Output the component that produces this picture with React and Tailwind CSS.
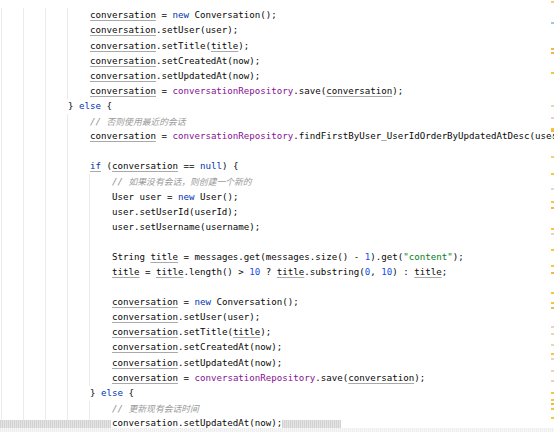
import React from 'react';

// token kinds: p plain, k keyword, f field, u underlined local, c comment, z cjk comment, n number, s string
const K = (t) => ({ k: 'k', t });
const U = (t) => ({ k: 'u', t });
const F = (t) => ({ k: 'f', t });
const N = (t) => ({ k: 'n', t });
const S = (t) => ({ k: 's', t });
const P = (t) => ({ k: 'p', t });
const C = (t) => [{ k: 'c', t: '// ' }, { k: 'z', t }];

const createBlock = (g) => [
  { g, tk: [U('conversation'), P(' = '), K('new'), P(' Conversation();')] },
  { g, tk: [U('conversation'), P('.setUser(user);')] },
  { g, tk: [U('conversation'), P('.setTitle('), U('title'), P(');')] },
  { g, tk: [U('conversation'), P('.setCreatedAt(now);')] },
  { g, tk: [U('conversation'), P('.setUpdatedAt(now);')] },
  { g, tk: [U('conversation'), P(' = '), F('conversationRepository'), P('.save('), U('conversation'), P(');')] },
];

const lines = [
  ...createBlock(4),
  { g: 3, tk: [P('} '), K('else'), P(' {')] },
  { g: 4, tk: C('否则使用最近的会话') },
  { g: 4, tk: [U('conversation'), P(' = '), F('conversationRepository'), P('.findFirstByUser_UserIdOrderByUpdatedAtDesc(userId);')] },
  { g: 4, tk: [] },
  { g: 4, tk: [{ k: 'ku', t: 'if' }, P(' ('), U('conversation'), P(' == '), K('null'), P(') {')] },
  { g: 5, tk: C('如果没有会话，则创建一个新的') },
  { g: 5, tk: [P('User user = '), K('new'), P(' User();')] },
  { g: 5, tk: [P('user.setUserId(userId);')] },
  { g: 5, tk: [P('user.setUsername(username);')] },
  { g: 5, tk: [] },
  { g: 5, tk: [P('String '), U('title'), P(' = messages.get(messages.size() - '), N('1'), P(').get('), S('"content"'), P(');')] },
  { g: 5, tk: [U('title'), P(' = '), U('title'), P('.length() > '), N('10'), P(' ? '), U('title'), P('.substring('), N('0'), P(', '), N('10'), P(') : '), U('title'), P(';')] },
  { g: 5, tk: [] },
  ...createBlock(5),
  { g: 4, tk: [P('} '), K('else'), P(' {')] },
  { g: 5, tk: C('更新现有会话时间') },
  { g: 5, tk: [P('conversation.setUpdatedAt(now);')], last: true },
];

const markers = [
  [1, '#f3c98a'], [22, '#9cc6ec'], [48, '#f0b84a'], [52, '#f0b84a'], [72, '#f5c53d'], [105, '#e3d6bd'],
  [117, '#ead0c4'], [128, '#f5c53d'], [130, '#f0b84a'], [136, '#e3d6bd'], [156, '#f1cf7a'], [173, '#f5c53d'],
  [188, '#dcdcd0'], [201, '#f5c53d'], [207, '#f0b84a'], [228, '#f5c53d'], [233, '#e3d6bd'], [249, '#f5c53d'],
  [265, '#f5c53d'], [272, '#f0b84a'], [292, '#f5c53d'], [302, '#f5c53d'], [307, '#f0b84a'], [326, '#e3d6bd'],
  [333, '#e3d6bd'], [344, '#e3d6bd'], [353, '#f5c53d'], [358, '#e3d6bd'], [370, '#e3d6bd'], [380, '#ead0c4'],
  [392, '#f5c53d'], [399, '#f5c53d'], [403, '#f0b84a'], [408, '#f5c53d'], [417, '#f5c53d'],
];

const tokenClass = {
  p: 'text-[#080808]',
  k: 'text-[#0033b3]',
  ku: 'text-[#0033b3] underline decoration-[#a9a9a9] underline-offset-2',
  f: 'text-[#871094]',
  u: 'text-[#080808] underline decoration-[#a9a9a9] underline-offset-2',
  c: 'text-[#8c8c8c] italic',
  z: "text-[#9a9a9a] italic text-[8.8px] font-['Noto_Sans_CJK_SC',sans-serif]",
  n: 'text-[#1750eb]',
  s: 'text-[#067d17]',
};

function CodeLine({ line }) {
  const guides = Array.from({ length: line.g });
  return (
    <div className="relative flex h-[15.1px] leading-[15.1px] whitespace-pre">
      {line.last && (
        <div className="absolute left-[-1px] top-[4px] h-[8px] w-[341px] bg-[repeating-linear-gradient(90deg,#d3d3d3_0_1px,#e3e3e3_1px_2px)]" />
      )}
      {guides.map((_, i) => (
        <span key={i} className="w-[22px] shrink-0 border-l border-[#ebebeb]" />
      ))}
      <span className={line.last ? 'relative bg-white pl-[1px]' : 'pl-[1px]'}>
        {line.tk.map((t, i) => (
          <span key={i} className={tokenClass[t.k]}>{t.t}</span>
        ))}
      </span>
    </div>
  );
}

export default function App() {
  return (
    <div className="relative h-[432px] w-[554px] overflow-hidden bg-white font-['DejaVu_Sans_Mono',monospace] text-[9.13px]">
      <div className="pl-[1px] pt-[8.4px]">
        {lines.map((line, i) => (
          <CodeLine key={i} line={line} />
        ))}
      </div>

      {/* error stripe on the right */}
      <div className="absolute right-0 top-0 h-full w-[4px]">
        {markers.map(([y, c], i) => (
          <span key={i} className="absolute left-[1px] h-[2px] w-[3px]" style={{ top: y, background: c }} />
        ))}
      </div>

      {/* horizontal scrollbar track */}
      <div className="absolute bottom-0 left-0 h-[4px] w-full bg-[repeating-linear-gradient(90deg,#eeeeee_0_1px,#f7f7f7_1px_2px)]" />
    </div>
  );
}
